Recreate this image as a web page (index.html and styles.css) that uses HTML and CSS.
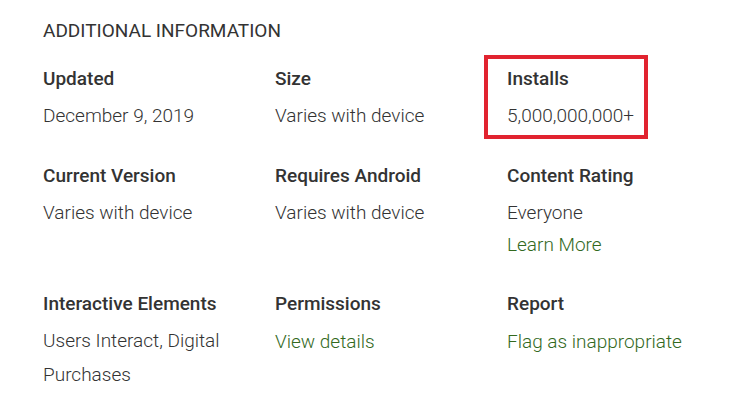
FILE: index.html
```html
<!DOCTYPE html>
<html lang="en">

<head>
    <meta charset="UTF-8">
    <title>Additional Information</title>
    <link rel="stylesheet" href="styles.css">
</head>

<body>
    <section class="info">
        <h2 class="info-title">ADDITIONAL INFORMATION</h2>
        <div class="info-grid">
            <div class="info-item">
                <div class="info-label">Updated</div>
                <div class="info-value">December 9, 2019</div>
            </div>
            <div class="info-item">
                <div class="info-label">Size</div>
                <div class="info-value">Varies with device</div>
            </div>
            <div class="info-item highlight">
                <div class="info-label">Installs</div>
                <div class="info-value">5,000,000,000+</div>
                <span class="highlight-box"></span>
            </div>

            <div class="info-item">
                <div class="info-label">Current Version</div>
                <div class="info-value">Varies with device</div>
            </div>
            <div class="info-item">
                <div class="info-label">Requires Android</div>
                <div class="info-value">Varies with device</div>
            </div>
            <div class="info-item">
                <div class="info-label">Content Rating</div>
                <div class="info-value">Everyone</div>
                <a class="info-link" href="#">Learn More</a>
            </div>

            <div class="info-item">
                <div class="info-label">Interactive Elements</div>
                <div class="info-value wrap">Users Interact, Digital Purchases</div>
            </div>
            <div class="info-item">
                <div class="info-label">Permissions</div>
                <a class="info-link first" href="#">View details</a>
            </div>
            <div class="info-item">
                <div class="info-label">Report</div>
                <a class="info-link first" href="#">Flag as inappropriate</a>
            </div>
        </div>
    </section>
</body>

</html>
```

FILE: styles.css
```css
body {
    margin: 0;
    background-color: #ffffff;
    font-family: Roboto, "Liberation Sans", Arial, sans-serif;
    color: #333333;
}

.info {
    padding: 19px 0 0 43px;
}

.info-title {
    margin: 0 0 24px 0;
    font-size: 19px;
    font-weight: 400;
    line-height: 24px;
    color: #333333;
}

.info-grid {
    display: grid;
    grid-template-columns: 232px 232px 232px;
}

.info-item {
    position: relative;
    padding-bottom: 31px;
}

.info-label {
    font-size: 19px;
    font-weight: 500;
    line-height: 24px;
    color: #333333;
    margin-bottom: 13px;
}

.info-value {
    font-size: 19px;
    font-weight: 300;
    line-height: 34px;
    margin-top: -5px;
    color: #333333;
}

.info-value.wrap {
    width: 190px;
}

.info-link {
    display: block;
    font-size: 19px;
    font-weight: 300;
    line-height: 30px;
    padding-bottom: 1px;
    color: #33691e;
    text-decoration: none;
}

.info-link.first {
    margin-top: -2px;
}

.highlight-box {
    position: absolute;
    left: -23px;
    top: -12px;
    width: 156px;
    height: 76px;
    border: 4px solid #e1232f;
}
```
